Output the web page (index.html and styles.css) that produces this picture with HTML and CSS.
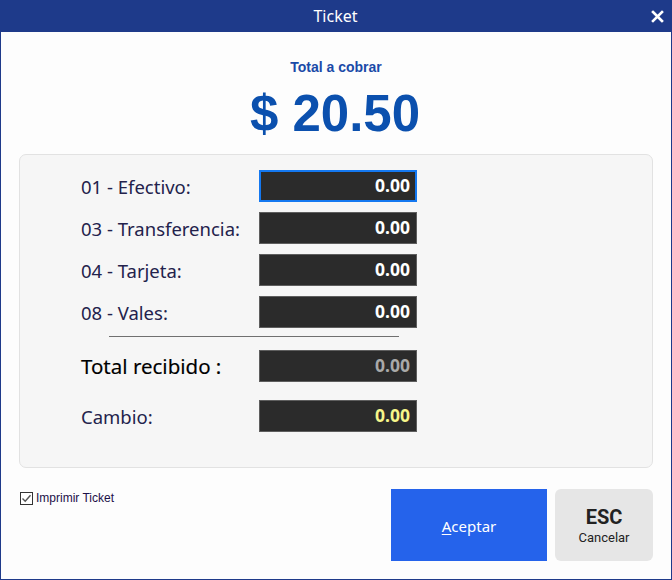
FILE: index.html
```html
<!DOCTYPE html>
<html lang="es">
<head>
<meta charset="utf-8">
<title>Ticket</title>
<link rel="stylesheet" href="styles.css">
</head>
<body>
<div class="window">
  <div class="titlebar">
    <span class="title">Ticket</span>
    <svg class="close" width="13" height="13" viewBox="0 0 13 13"><path d="M2 2 L11 11 M11 2 L2 11" stroke="#fff" stroke-width="2.6" stroke-linecap="square"/></svg>
  </div>
  <div class="content">
    <div class="total-label">Total a cobrar</div>
    <div class="total-amount">$ 20.50</div>
    <div class="panel">
      <div class="row">
        <span class="label">01 - Efectivo:</span>
        <div class="field focused">0.00</div>
      </div>
      <div class="row">
        <span class="label">03 - Transferencia:</span>
        <div class="field">0.00</div>
      </div>
      <div class="row">
        <span class="label">04 - Tarjeta:</span>
        <div class="field">0.00</div>
      </div>
      <div class="row">
        <span class="label">08 - Vales:</span>
        <div class="field">0.00</div>
      </div>
      <div class="separator"></div>
      <div class="row row-total">
        <span class="label label-strong">Total recibido :</span>
        <div class="field field-muted">0.00</div>
      </div>
      <div class="row row-change">
        <span class="label">Cambio:</span>
        <div class="field field-yellow">0.00</div>
      </div>
    </div>
    <div class="footer">
      <label class="print">
        <span class="checkbox"><svg width="11" height="11" viewBox="0 0 11 11"><path d="M1.5 5.5 L4.2 8.2 L9.5 2.2" fill="none" stroke="#555" stroke-width="1.4"/></svg></span>
        <span class="print-text">Imprimir Ticket</span>
      </label>
      <div class="buttons">
        <button class="btn-accept"><u>A</u>ceptar</button>
        <button class="btn-cancel"><span class="esc">ESC</span><span class="cancel">Cancelar</span></button>
      </div>
    </div>
  </div>
</div>
</body>
</html>
```

FILE: styles.css
```css
html, body {
  margin: 0;
  padding: 0;
  background: #fdfdfd;
}

.window {
  width: 672px;
  height: 580px;
  display: flex;
  flex-direction: column;
  box-sizing: border-box;
}

.titlebar {
  height: 32px;
  background: #1e3a8a;
  display: flex;
  align-items: center;
  justify-content: center;
  position: relative;
  flex-shrink: 0;
}

.title {
  color: #fff;
  font-family: "Noto Sans", sans-serif;
  font-size: 16px;
  line-height: 32px;
  margin-left: -1px;
}

.close {
  position: absolute;
  right: 8px;
  top: 10px;
}

.content {
  flex: 1;
  border: 1px solid #1e3a8a;
  border-top: none;
  background: #fdfdfd;
  padding: 0 18px;
  display: flex;
  flex-direction: column;
}

.total-label {
  margin-top: 26px;
  text-align: center;
  font-family: "Liberation Sans", Arial, sans-serif;
  font-weight: bold;
  font-size: 14px;
  line-height: 18px;
  color: #1a4aa8;
}

.total-amount {
  margin-top: 6px;
  text-align: center;
  font-family: "Liberation Sans", Arial, sans-serif;
  font-weight: bold;
  font-size: 51px;
  line-height: 64px;
  color: #0b50ae;
  margin-left: -2px;
}

.panel {
  margin-top: 8px;
  height: 314px;
  box-sizing: border-box;
  background: #f6f6f6;
  border: 1px solid #e2e2e2;
  border-radius: 7px;
  padding: 15px 0 0 61px;
  display: flex;
  flex-direction: column;
}

.row {
  display: flex;
  align-items: center;
  height: 32px;
  margin-bottom: 10px;
}

.label {
  width: 178px;
  font-family: "Noto Sans", sans-serif;
  font-size: 18.5px;
  color: #23224c;
  white-space: nowrap;
}

.label-strong {
  font-size: 20.5px;
  font-weight: 400;
  color: #000;
  -webkit-text-stroke: 0.15px #000;
}

.field {
  width: 158px;
  height: 32px;
  box-sizing: border-box;
  background: #2b2b2b;
  border: 1px solid #5e5e5e;
  color: #fff;
  font-family: "Noto Sans", sans-serif;
  font-weight: bold;
  font-size: 17.5px;
  line-height: 29px;
  text-align: right;
  padding-right: 6px;
}

.field.focused {
  border: 2px solid #1478f0;
  line-height: 27px;
  padding-right: 5px;
}

.field-muted {
  color: #a9a9a9;
}

.field-yellow {
  color: #f6f58a;
}

.separator {
  margin: -2px 0 13px 28px;
  width: 290px;
  height: 1px;
  background: #707070;
}

.row-total {
  margin-bottom: 18px;
}

.footer {
  display: flex;
  justify-content: space-between;
  align-items: flex-start;
  margin-top: 21px;
}

.print {
  display: flex;
  align-items: center;
  margin-top: 2px;
  margin-left: 1px;
}

.checkbox {
  width: 13px;
  height: 13px;
  box-sizing: border-box;
  border: 1px solid #333;
  background: #fff;
  display: flex;
  align-items: center;
  justify-content: center;
}

.print-text {
  margin-left: 3px;
  font-family: "Liberation Sans", Arial, sans-serif;
  font-size: 12px;
  color: #1c1048;
}

.buttons {
  display: flex;
  gap: 8px;
}

.btn-accept {
  width: 156px;
  height: 72px;
  border: none;
  background: #2563eb;
  color: #fff;
  font-family: "Noto Sans", sans-serif;
  font-size: 15px;
  padding: 2px 0 0;
}

.btn-accept u {
  text-underline-offset: 2px;
}

.btn-cancel {
  width: 98px;
  height: 72px;
  border: none;
  border-radius: 6px;
  background: #e6e6e6;
  display: flex;
  flex-direction: column;
  align-items: center;
  justify-content: center;
  padding: 3px 0 0;
}

.esc {
  font-family: Roboto, sans-serif;
  font-weight: bold;
  font-size: 20px;
  line-height: 22px;
  color: #222;
}

.cancel {
  font-family: Roboto, sans-serif;
  font-size: 13px;
  line-height: 20px;
  color: #222;
}
```
